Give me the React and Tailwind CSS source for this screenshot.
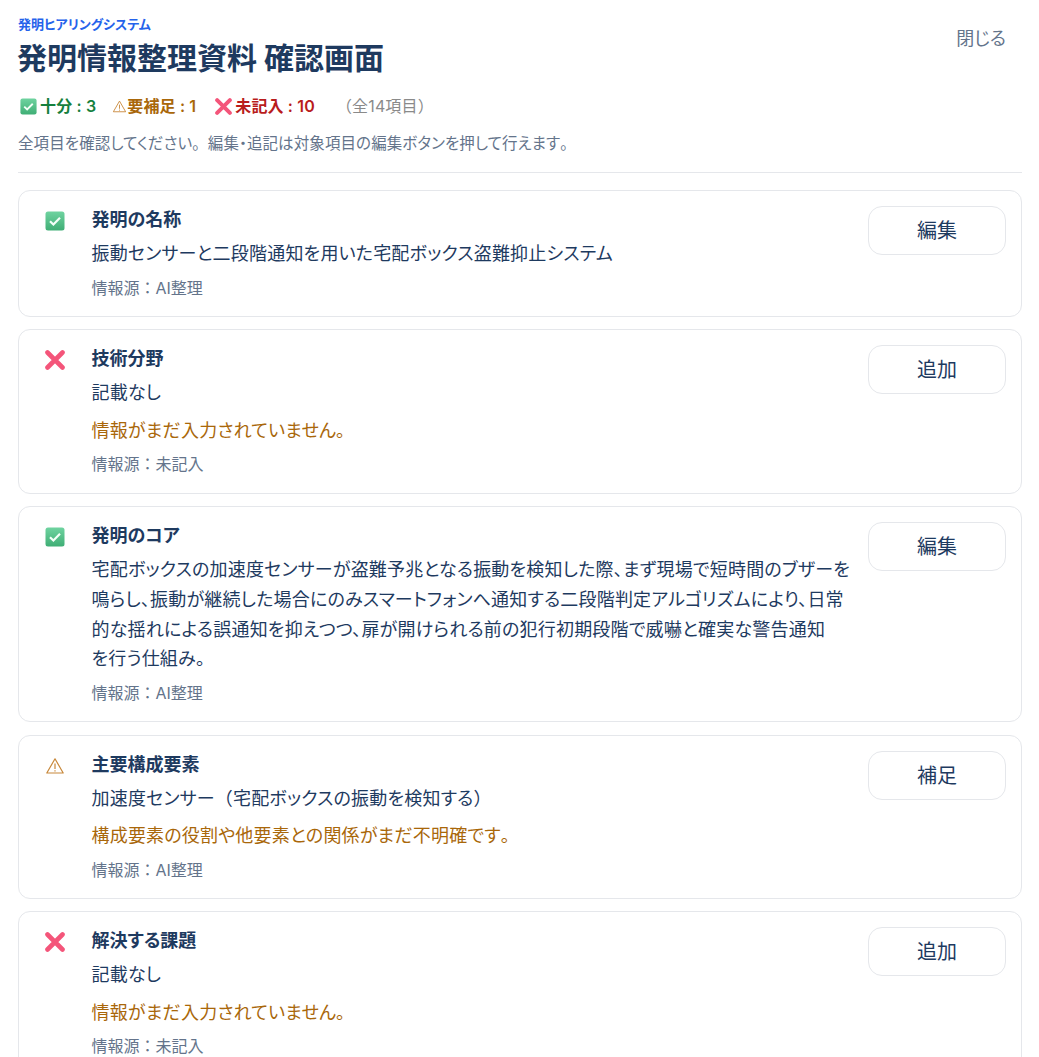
import React from 'react';

const CheckIcon = ({ className }) => (
  <svg viewBox="0 0 20 20" className={className}>
    <defs>
      <linearGradient id="chk" x1="0" y1="0" x2="0" y2="1">
        <stop offset="0" stopColor="#6fd3a0" />
        <stop offset="1" stopColor="#3fae75" />
      </linearGradient>
    </defs>
    <rect x="0.5" y="0.5" width="19" height="19" rx="2.5" fill="url(#chk)" />
    <path d="M5 10.2l3.4 3.3L15 6.8" fill="none" stroke="#f4fff8" strokeWidth="2.2" />
  </svg>
);

const CrossIcon = ({ className }) => (
  <svg viewBox="0 0 20 20" className={className}>
    <path d="M2.5 2.5L17.5 17.5M17.5 2.5L2.5 17.5" stroke="#f4557a" strokeWidth="4.6" strokeLinecap="round" />
  </svg>
);

const WarnIcon = ({ className }) => (
  <svg viewBox="0 0 20 20" className={className}>
    <path d="M10 2.8L18.2 17H1.8Z" fill="none" stroke="#c8883a" strokeWidth="1.2" strokeLinejoin="round" />
    <path d="M10 7.5v5.5M10 14.2v1.3" stroke="#c8883a" strokeWidth="1.2" />
  </svg>
);

const icons = { ok: CheckIcon, missing: CrossIcon, warn: WarnIcon };

// kana are set tight, but these marks keep their full width
const Jp = ({ text }) =>
  text.split(/([。（）：])/).map((part, i) =>
    i % 2 ? (
      <span key={i} className="[font-feature-settings:normal]">
        {part}
      </span>
    ) : (
      part
    ),
  );

const items = [
  { status: 'ok', title: '発明の名称', body: '振動センサーと二段階通知を用いた宅配ボックス盗難抑止システム', source: 'AI整理', action: '編集' },
  { status: 'missing', title: '技術分野', body: '記載なし', note: '情報がまだ入力されていません。', source: '未記入', action: '追加' },
  {
    status: 'ok',
    title: '発明のコア',
    body: '宅配ボックスの加速度センサーが盗難予兆となる振動を検知した際、まず現場で短時間のブザーを鳴らし、振動が継続した場合にのみスマートフォンへ通知する二段階判定アルゴリズムにより、日常的な揺れによる誤通知を抑えつつ、扉が開けられる前の犯行初期段階で威嚇と確実な警告通知\nを行う仕組み。',
    source: 'AI整理',
    action: '編集',
  },
  { status: 'warn', title: '主要構成要素', body: '加速度センサー（宅配ボックスの振動を検知する）', note: '構成要素の役割や他要素との関係がまだ不明確です。', source: 'AI整理', action: '補足' },
  { status: 'missing', title: '解決する課題', body: '記載なし', note: '情報がまだ入力されていません。', source: '未記入', action: '追加' },
];

const ItemCard = ({ item }) => {
  const Icon = icons[item.status];
  return (
    <div className="flex gap-[15.5px] rounded-xl border border-gray-200 bg-white p-[15px] pb-[18.3px]">
      <div className="flex w-[42px] shrink-0 justify-center pt-[5px]">
        <Icon className="h-5 w-5" />
      </div>
      <div className="min-w-0 flex-1 pt-0.5">
        <h3 className="text-[18px] leading-6 font-bold text-[#1e3a5f]">{item.title}</h3>
        <p className="mt-[7px] text-[18px] leading-[1.65] tracking-[0.2px] whitespace-pre-line text-[#1e3a5f]">
          <Jp text={item.body} />
        </p>
        {item.note && (
          <p className="mt-[7.5px] text-[18px] leading-[1.65] tracking-[0.2px] text-[#a9670a]">
            <Jp text={item.note} />
          </p>
        )}
        <p className="mt-[9px] text-base leading-5 text-[#64748b]">
          <Jp text={`情報源：${item.source}`} />
        </p>
      </div>
      <button className="h-[49px] w-[138px] shrink-0 rounded-[14px] border border-gray-200 bg-white pt-px text-[20px] text-[#1e3a5f]">
        {item.action}
      </button>
    </div>
  );
};

export default function App() {
  return (
    <div className="h-[1057px] overflow-hidden bg-white pt-[14px] pr-[17px] pl-[18px] font-['Inter','Noto_Sans_CJK_JP',sans-serif] [font-feature-settings:'palt']">
      <header className="border-b border-gray-200 pb-4">
        <div className="flex items-start justify-between">
          <div>
            <p className="text-[13px] leading-5 font-semibold text-[#2563eb]">発明ヒアリングシステム</p>
            <h1 className="mt-1 -ml-px text-[30px] leading-10 font-bold text-[#1e3a5f]">発明情報整理資料 確認画面</h1>
          </div>
          <button className="mt-[11px] mr-4 text-[18px] leading-7 text-[#64748b]">閉じる</button>
        </div>
        <div className="mt-[16px] flex items-center text-base leading-6 font-semibold tracking-[0.15px]">
          <CheckIcon className="mr-[3px] ml-[2px] h-[17px] w-[17px]" />
          <span className="text-[#15803d]">十分 : 3</span>
          <WarnIcon className="ml-4 h-[15px] w-[15px]" />
          <span className="text-[#a9670a]">要補足 : 1</span>
          <CrossIcon className="mr-[3px] ml-[19px] h-[17px] w-[17px]" />
          <span className="text-[#b91c1c]">未記入 : 10</span>
          <span className="ml-[21px] font-normal text-[#8a8a8a]">
            <Jp text="（全14項目）" />
          </span>
        </div>
        <p className="mt-[14px] text-[15.5px] leading-6 tracking-[0.1px] text-[#64748b]">
          <Jp text="全項目を確認してください。編集・追記は対象項目の編集ボタンを押して行えます。" />
        </p>
      </header>
      <main className="mt-[17px] flex flex-col gap-[12.5px]">
        {items.map((item) => (
          <ItemCard key={item.title} item={item} />
        ))}
      </main>
    </div>
  );
}
